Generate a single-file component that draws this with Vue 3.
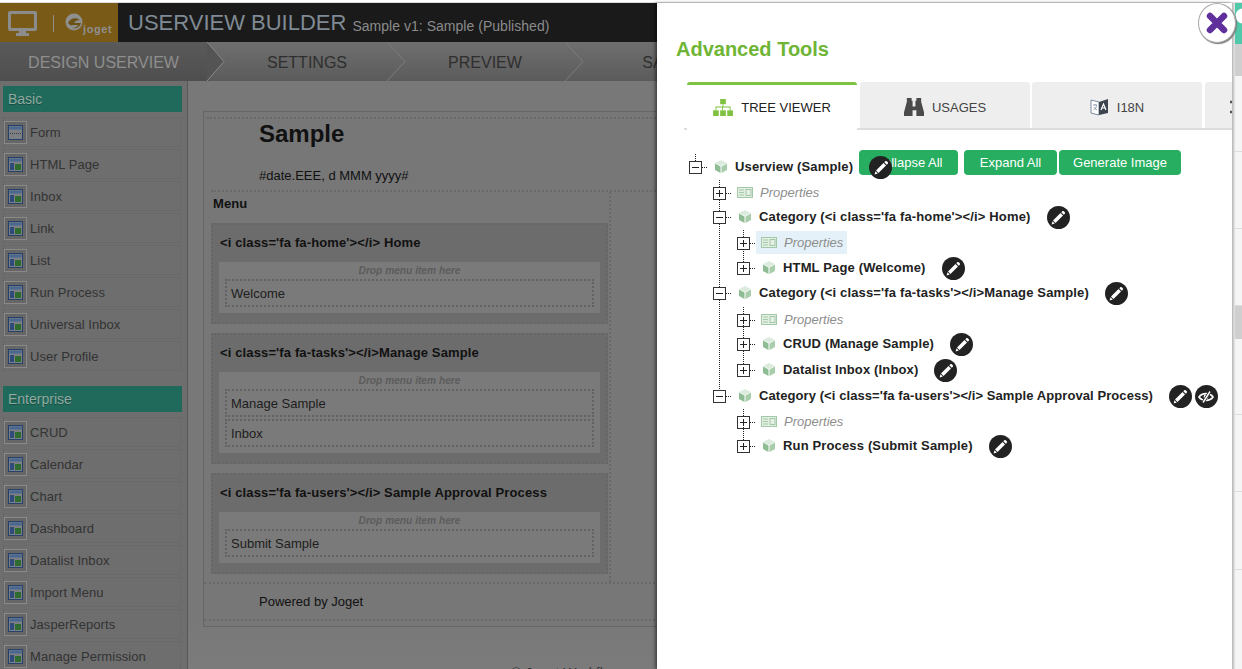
<script setup>
const basic = [
  { name: 'Form', form: true }, { name: 'HTML Page' }, { name: 'Inbox' }, { name: 'Link' },
  { name: 'List' }, { name: 'Run Process' }, { name: 'Universal Inbox' }, { name: 'User Profile' }
]
const enterprise = ['CRUD', 'Calendar', 'Chart', 'Dashboard', 'Datalist Inbox', 'Import Menu', 'JasperReports', 'Manage Permission'].map(name => ({ name }))
const cats = [
  { title: "<i class='fa fa-home'></i> Home", items: ['Welcome'] },
  { title: "<i class='fa fa-tasks'></i>Manage Sample", items: ['Manage Sample', 'Inbox'] },
  { title: "<i class='fa fa-users'></i> Sample Approval Process", items: ['Submit Sample'] }
]
const rows = [
  { label: 'Userview (Sample)', level: 0, open: true, edit: true, gap: 0 },
  { label: 'Properties', level: 1, prop: true, gap: 2 },
  { label: "Category (<i class='fa fa-home'></i> Home)", level: 1, open: true, edit: true, gap: 0 },
  { label: 'Properties', level: 2, prop: true, hl: true, gap: 2 },
  { label: 'HTML Page (Welcome)', level: 2, edit: true, gap: 1 },
  { label: "Category (<i class='fa fa-tasks'></i>Manage Sample)", level: 1, open: true, edit: true, gap: 1 },
  { label: 'Properties', level: 2, prop: true, gap: 3 },
  { label: 'CRUD (Manage Sample)', level: 2, edit: true, gap: 0 },
  { label: 'Datalist Inbox (Inbox)', level: 2, edit: true, gap: 2 },
  { label: "Category (<i class='fa fa-users'></i> Sample Approval Process)", level: 1, open: true, edit: true, eye: true, tight: true, gap: 2 },
  { label: 'Properties', level: 2, prop: true, gap: 2 },
  { label: 'Run Process (Submit Sample)', level: 2, edit: true, gap: 0 }
]
const stripBlocks = [
  { cls: 'teal' }, { cls: 'grey h32' }, { cls: 'cell h76' }, { cls: 'cell h77' }, { cls: 'cell h77' }, { cls: 'grey h33' },
  { cls: 'cell h76' }, { cls: 'cell h77' }, { cls: 'cell h78' }, { cls: 'cell last' }
]
</script>

<template>
  <div class="root">
    <div class="topline"></div>
    <div class="stage">
      <section class="builder">
        <header class="head">
          <div class="logo">
            <svg class="monitor" width="29" height="25" viewBox="0 0 29 25">
              <path d="M2 0h25a2 2 0 0 1 2 2v16a2 2 0 0 1-2 2H18v2h3v3H8v-3h3v-2H2a2 2 0 0 1-2-2V2a2 2 0 0 1 2-2zM3 3v14h23V3z" fill="#8c8c8c" fill-rule="evenodd"/>
            </svg>
            <span class="sep"></span>
            <svg class="jlogo" width="18" height="18" viewBox="0 0 18 18">
              <circle cx="9" cy="9" r="8.5" fill="#8f8f8f"/>
              <path d="M3 10c2-5 8-6 12-3-3 0-5 1-6 3h7c-1 4-5 6-9 5 3 0 5-1 6-3H8c-2 1-3 0-5-2z" fill="#6d5216"/>
            </svg>
            <span class="jtext">joget</span>
          </div>
          <h1 class="title">USERVIEW BUILDER</h1>
          <span class="subtitle">Sample v1: Sample (Published)</span>
        </header>

        <nav class="steps">
          <div class="step active">DESIGN USERVIEW
            <svg class="chev first" width="20" height="39" viewBox="0 0 20 39"><path d="M1 0l17 19.500L1 39z" fill="#545454"/><path d="M1 0l17 19.500L1 39" fill="none" stroke="#8a8a8a"/></svg>
          </div>
          <div class="step">SETTINGS
            <svg class="chev" width="20" height="39" viewBox="0 0 20 39"><path d="M1 0l18 19.500L1 39" fill="none" stroke="#7e7e7e"/></svg>
          </div>
          <div class="step">PREVIEW
            <svg class="chev" width="20" height="39" viewBox="0 0 20 39"><path d="M1 0l18 19.500L1 39" fill="none" stroke="#7e7e7e"/></svg>
          </div>
          <div class="step">SAVE</div>
        </nav>

        <div class="main">
          <aside class="side">
            <div class="side-head">Basic</div>
            <div v-for="it in basic" :key="it.name" class="side-item">
              <span class="ico-box">
                <svg width="15" height="15" viewBox="0 0 15 15">
                  <rect x=".5" y=".5" width="14" height="14" fill="#7c7f84" stroke="#25406a"/>
                  <rect x="1.500" y="1.500" width="12" height="3" fill="#4a6791"/>
                  <template v-if="it.form">
                    <path d="M2 8.500h11" stroke="#3e3e3e" stroke-dasharray="1 1"/>
                  </template>
                  <template v-else>
                    <rect x="2" y="6" width="4" height="7" fill="#2f4c7c"/>
                    <rect x="7" y="7" width="6" height="6" fill="#2f6b2f"/>
                  </template>
                </svg>
              </span>
              {{ it.name }}
            </div>
            <div class="side-head second">Enterprise</div>
            <div v-for="it in enterprise" :key="it.name" class="side-item">
              <span class="ico-box">
                <svg width="15" height="15" viewBox="0 0 15 15">
                  <rect x=".5" y=".5" width="14" height="14" fill="#7c7f84" stroke="#25406a"/>
                  <rect x="1.500" y="1.500" width="12" height="3" fill="#4a6791"/>
                  <rect x="2" y="6" width="4" height="7" fill="#2f4c7c"/>
                  <rect x="7" y="7" width="6" height="6" fill="#2f6b2f"/>
                </svg>
              </span>
              {{ it.name }}
            </div>
          </aside>

          <div class="content">
            <div class="canvas">
              <div class="c-head">
                <div class="c-name">Sample</div>
                <div class="c-date">#date.EEE, d MMM yyyy#</div>
              </div>
              <div class="c-mid">
                <div class="menu">
                  <div class="menu-label">Menu</div>
                  <div v-for="c in cats" :key="c.title" class="cat">
                    <div class="cat-title">{{ c.title }}</div>
                    <div class="cat-inner">
                      <div class="drop">Drop menu item here</div>
                      <div v-for="i in c.items" :key="i" class="cat-item">{{ i }}</div>
                    </div>
                  </div>
                </div>
              </div>
              <div class="c-foot">Powered by Joget</div>
            </div>
            <div class="copyright">© Joget Workflow</div>
          </div>
        </div>
      </section>

      <section class="panel">
        <h2 class="panel-title">Advanced Tools</h2>
        <div class="tabs">
          <div class="tab on">
            <svg width="20" height="17" viewBox="0 0 21 18" fill="#7fc241">
              <rect x="7.500" y="0" width="6" height="5.500"/>
              <rect x="0" y="12" width="6" height="6"/><rect x="7.500" y="12" width="6" height="6"/><rect x="15" y="12" width="6" height="6"/>
              <path d="M10 5.500h1V8h7.500v4h-1V9h-7v3h-1V9H3.500v3h-1V8H10z"/>
            </svg>
            TREE VIEWER
          </div>
          <div class="tab">
            <svg width="20" height="20" viewBox="0 0 21 21" fill="#4a4a4a">
              <path d="M3 1h5v3h1v6h3V4h1V1h5v4l3 11v4h-8v-6H9v6H0v-4L3 5z"/>
            </svg>
            USAGES
          </div>
          <div class="tab">
            <svg width="19" height="20" viewBox="0 0 19 20">
              <path d="M1 3l8 2v13l-8-2z" fill="#fff" stroke="#7b8aa0"/>
              <path d="M9 5l9-3v14l-9 2z" fill="#3c4450"/>
              <path d="M11 13l2.500-6 2.500 6M12 11h3" stroke="#fff" fill="none" stroke-width="1.200"/>
              <path d="M3 8h4M5 7v1M3.500 13c2-1 3-3 3-5M4 10c.5 1 1.500 2 3 3" stroke="#7b8aa0" fill="none" stroke-width=".8"/>
            </svg>
            I18N
          </div>
          <div class="tab narrow">
            <svg width="22" height="14" viewBox="0 0 22 14" fill="none" stroke="#555" stroke-width="2.500"><path d="M1 2h5l9 10h5M1 12h5l9-10h5"/></svg>
          </div>
        </div>

        <div class="tree">
          <span class="vline"></span>
          <div class="toolbar">
            <button class="btn b1">Collapse All</button>
            <button class="btn b2">Expand All</button>
            <button class="btn b3">Generate Image</button>
          </div>
          <div
            v-for="(r, i) in rows"
            :key="i"
            class="row"
            :class="['l' + r.level]"
            :style="{ marginTop: r.gap + 'px' }"
          >
            <span class="toggle" :class="{ short: r.prop }">
              <svg width="13" height="13" viewBox="0 0 13 13">
                <rect x=".5" y=".5" width="12" height="12" fill="#fff" stroke="#333"/>
                <path :d="r.open ? 'M3 6.500h7' : 'M3 6.500h7M6.500 3v7'" stroke="#222"/>
              </svg>
            </span>
            <span class="label" :class="{ prop: r.prop, hl: r.hl, tight: r.tight }">
              <svg v-if="r.prop" width="16" height="11" viewBox="0 0 16 11">
                <rect x=".5" y=".5" width="15" height="10" fill="#e4efe4" stroke="#a3c9a8"/>
                <path d="M2 3h5M2 5.500h5M2 8h5" stroke="#a3c9a8"/>
                <rect x="9" y="2.500" width="5" height="6" fill="none" stroke="#a3c9a8"/>
              </svg>
              <svg v-else width="12" height="13" viewBox="0 0 12 13">
                <path d="M6 0l6 3-6 3-6-3z" fill="#dcebdd"/>
                <path d="M0 3.500l5.500 3V13L0 10z" fill="#8ebc93"/>
                <path d="M12 3.500l-5.500 3V13l5.500-3z" fill="#a8cdaa"/>
              </svg>
              {{ r.label }}
            </span>
            <span v-if="r.edit" class="round first">
              <svg width="22" height="22" viewBox="0 0 22 22">
                <path d="M6 13.500L13.500 6l2.500 2.500L8.500 16z" fill="#fff"/>
                <path d="M14.300 5.200l1-1c.4-.4 1-.4 1.400 0l1.100 1.100c.4.400.4 1 0 1.400l-1 1z" fill="#fff"/>
                <path d="M5.500 14.200l2.300 2.300-3.200.9z" fill="#fff"/>
              </svg>
            </span>
            <span v-if="r.eye" class="round">
              <svg width="22" height="22" viewBox="0 0 22 22">
                <path d="M4 11c3-4.500 11-4.500 14 0-3 4.500-11 4.500-14 0z" fill="none" stroke="#fff" stroke-width="1.600"/>
                <circle cx="11" cy="11" r="2.400" fill="#fff"/>
                <path d="M15 5.500L8 16.500" stroke="#222" stroke-width="3.200"/>
                <path d="M15 5.500L8 16.500" stroke="#fff" stroke-width="1.400"/>
              </svg>
            </span>
          </div>
        </div>
      </section>

      <aside class="strip">
        <div v-for="(b, i) in stripBlocks" :key="i" :class="['sb', b.cls]"></div>
      </aside>
    </div>

    <button class="close">
      <svg width="22" height="22" viewBox="0 0 22 22">
        <path d="M4 4l14 14M18 4L4 18" stroke="#5f2f9b" stroke-width="6.500" stroke-linecap="round"/>
      </svg>
    </button>
  </div>
</template>

<style>
html, body { margin: 0; padding: 0; overflow: hidden; background: #fff; }
</style>

<style scoped>
* { box-sizing: border-box; }
.root {
  position: relative; width: 1242px; height: 669px; overflow: hidden; background: #fff;
  font-family: "Liberation Sans", Arial, sans-serif; color: #222;
}
.topline { height: 3px; border-bottom: 1px solid #ddd; }
.stage { display: flex; height: 666px; }

/* Builder (dimmed) */
.builder { width: 657px; flex: none; overflow: hidden; background: #777; }
.head { height: 39px; background: #1a1a1a; display: flex; align-items: center; }
.logo { width: 118px; height: 39px; background: #7a5a17; display: flex; align-items: flex-start; position: relative; flex: none; }
.monitor { margin: 8px 0 0 8px; }
.sep { width: 1px; height: 17px; background: #8f8f8f; margin: 12px 0 0 16px; }
.jlogo { margin: 10px 0 0 11px; }
.jtext { font-size: 11px; font-weight: bold; color: #8f8f8f; margin-top: 20px; letter-spacing: .6px; }
.title { margin: 0 0 0 10px; font-size: 22px; font-weight: normal; color: #7f8a94; white-space: nowrap; }
.subtitle { margin: 7px 0 0 6px; font-size: 14px; letter-spacing: .03px; color: #8b8b8b; white-space: nowrap; }

.steps { height: 39px; display: flex; background: linear-gradient(#6f6f6f, #5b5b5b); }
.step {
  position: relative; flex: none; width: 178px; display: flex; align-items: center; justify-content: center;
  font-size: 16px; color: #2e2e2e; white-space: nowrap; padding-top: 2px;
}
.step.active { width: 218px; padding-right: 11px; color: #8e8e8e; background: linear-gradient(#5a5a5a 0, #4e4e4e 100%); background-size: 209px 100%; background-repeat: no-repeat; }
.chev { position: absolute; right: -10px; top: 0; }
.chev.first { right: -8px; z-index: 1; }

.main { display: flex; height: 588px; }
.side { width: 188px; flex: none; background: #6e6e6e; border-right: 1px solid #575757; padding: 5px 0 0 3px; overflow: hidden; }
.side-head {
  width: 179px; height: 26px; background: #1f6a5a; color: #8fa9a1; font-size: 14px; line-height: 26px;
  padding-left: 5px; margin-bottom: 5px; text-shadow: 0 1px 0 #174d42;
}
.side-head.second { margin-top: 15px; }
.side-item {
  height: 30px; width: 178px; margin-bottom: 2px; display: flex; align-items: center; gap: 3px;
  font-size: 13px; letter-spacing: .05px; color: #333; border: 1px dotted #656565; white-space: nowrap;
}
.ico-box {
  width: 23px; height: 23px; border: 1px solid #8a8a8a; background: #666; flex: none;
  display: flex; align-items: center; justify-content: center; margin-left: 0;
}
.content { flex: 1; min-width: 0; padding: 30px 0 0 15px; overflow: hidden; position: relative; background: linear-gradient(#787878, #787878 90%, #7b7b7b); }
.canvas { width: 620px; height: 516px; border: 1px solid #666; border-right: 0; padding-top: 5px; background: #777; }
.c-head { height: 73px; border-top: 2px dotted #686868; margin-left: 3px; padding-left: 52px; color: #111; }
.c-name { font-size: 24px; font-weight: bold; line-height: 28px; margin-top: 1px; }
.c-date { font-size: 13px; line-height: 16px; margin-top: 20px; }
.c-mid { margin-left: 7px; border-top: 2px dotted #686868; }
.menu { width: 400px; height: 390px; border-right: 2px dotted #686868; }
.menu-label { font-size: 13px; letter-spacing: .1px; font-weight: bold; color: #111; height: 31px; line-height: 23px; padding-left: 2px; }
.cat { width: 397px; border: 2px dotted #666; background: #6c6c6c; padding: 0 6px 9px; margin-bottom: 9px; }
.cat-title { height: 37px; line-height: 35px; font-size: 13px; letter-spacing: .13px; padding-left: 1px; font-weight: bold; color: #111; white-space: nowrap; }
.cat-inner { background: #7a7a7a; padding: 0 6px 6px; }
.drop { height: 17px; line-height: 17px; text-align: center; font-size: 10.200px; font-weight: bold; font-style: italic; color: #5c5c5c; }
.cat-item { height: 28px; line-height: 25px; border: 2px dotted #626262; padding-left: 4px; font-size: 13px; color: #1d1d1d; }
.cat-item + .cat-item { margin-top: 2px; }
.c-foot { margin-left: 0; height: 39px; border-top: 2px dotted #686868; border-bottom: 2px dotted #686868; padding-left: 55px; font-size: 13px; line-height: 35px; color: #111; }
.copyright { position: absolute; left: 323px; top: 584px; font-size: 14px; color: #333; white-space: nowrap; }

/* Panel */
.panel { width: 575px; flex: none; background: #fff; box-shadow: -2px 0 3px rgba(0, 0, 0, .45); position: relative; z-index: 3; overflow: hidden; }
.panel-title { margin: 33px 0 0 19px; height: 26px; line-height: 26px; font-size: 20px; font-weight: bold; color: #6fb535; white-space: nowrap; }
.tabs { margin: 20px 0 0 27px; padding-left: 3px; height: 48px; display: flex; gap: 2px; border-bottom: 2px solid #ddd; overflow: visible; }
.tab {
  flex: none; width: 170px; height: 46px; background: #eee; border-radius: 3px 3px 0 0; display: flex; align-items: center; justify-content: center;
  gap: 8px; font-size: 13px; color: #444; padding-top: 4px;
}
.tab.on { height: 48px; background: #fff; border-top: 3px solid #7fc241; color: #222; margin-right: 1px; padding: 0 0 1px; }
.tab.narrow { justify-content: flex-start; padding-left: 24px; margin-left: 1px; }
.tree { position: relative; padding-top: 24px; }
.vline { position: absolute; left: 62px; top: 50px; height: 209px; border-left: 1px dotted #222; }
.toolbar { position: absolute; left: 202px; top: 20px; display: flex; }
.btn {
  height: 25px; border: 0; border-radius: 4px; background: #27ae60; color: #fff; font: 13px "Liberation Sans", Arial, sans-serif;
  padding: 0;
}
.b1 { width: 99px; margin-right: 6px; }
.b2 { width: 93px; margin-right: 2px; }
.b3 { width: 122px; }
.row { position: relative; height: 24px; display: flex; align-items: center; white-space: nowrap; }
.l0 { padding-left: 32px; }
.l1 { padding-left: 56px; }
.l2 { padding-left: 80px; }
.toggle { position: relative; width: 13px; height: 13px; margin: 2px 6px 0 0; flex: none; z-index: 1; }
.toggle svg { display: block; position: relative; z-index: 1; }
.toggle::after { content: ""; position: absolute; left: 13px; top: 6px; width: 5px; border-top: 1px dotted #222; }
.l0 .toggle::before { content: ""; position: absolute; left: 6px; top: -7px; height: 7px; border-left: 1px dotted #222; }
.l2 .toggle::before { content: ""; position: absolute; left: 6px; top: -13px; height: 13px; border-left: 1px dotted #222; }
.l2 .toggle.short::before { top: -7px; height: 7px; }
.label { display: flex; align-items: center; gap: 8px; height: 23px; padding-left: 7px; padding-right: 4px; font-size: 13px; font-weight: bold; color: #222; letter-spacing: .15px; }
.label.tight { letter-spacing: .08px; }
.label.prop { padding-left: 5px; gap: 7px; font-weight: normal; font-style: italic; color: #8d8d8d; letter-spacing: 0; }
.label.hl { background: #e5f1f8; }
.round {
  position: relative; z-index: 2; width: 23px; height: 23px; border-radius: 50%; background: #222; display: flex; align-items: center; justify-content: center;
  margin-left: 3px; margin-top: 3px; flex: none;
}
.round.first { margin-left: 12px; }

/* Right strip */
.strip {
  width: 10px; flex: none; position: relative; z-index: 2; padding-left: 3px;
  background: linear-gradient(90deg, #bbb, #e6e6e6 3px, #f5f5f5 3px);
}
.sb { border-bottom: 1px solid #ddd; }
.teal { height: 41px; background: #4fc9a9; border: 0; background-image: radial-gradient(circle at 8px 13px, #fff 0 7px, transparent 8px); }
.grey { background: #cfcfcf; border: 0; }
.h32 { height: 32px; }
.h33 { height: 33px; }
.h76 { height: 76px; }
.h77 { height: 77px; }
.h78 { height: 78px; }
.last { height: 96px; border: 0; }

.close {
  position: absolute; left: 1198px; top: 3px; z-index: 5; width: 38px; height: 40px; border-radius: 50%; padding: 0;
  background: #fff; border: 1px solid #aaa; box-shadow: 1px 1px 1px #777;
  display: flex; align-items: center; justify-content: center;
}
</style>
